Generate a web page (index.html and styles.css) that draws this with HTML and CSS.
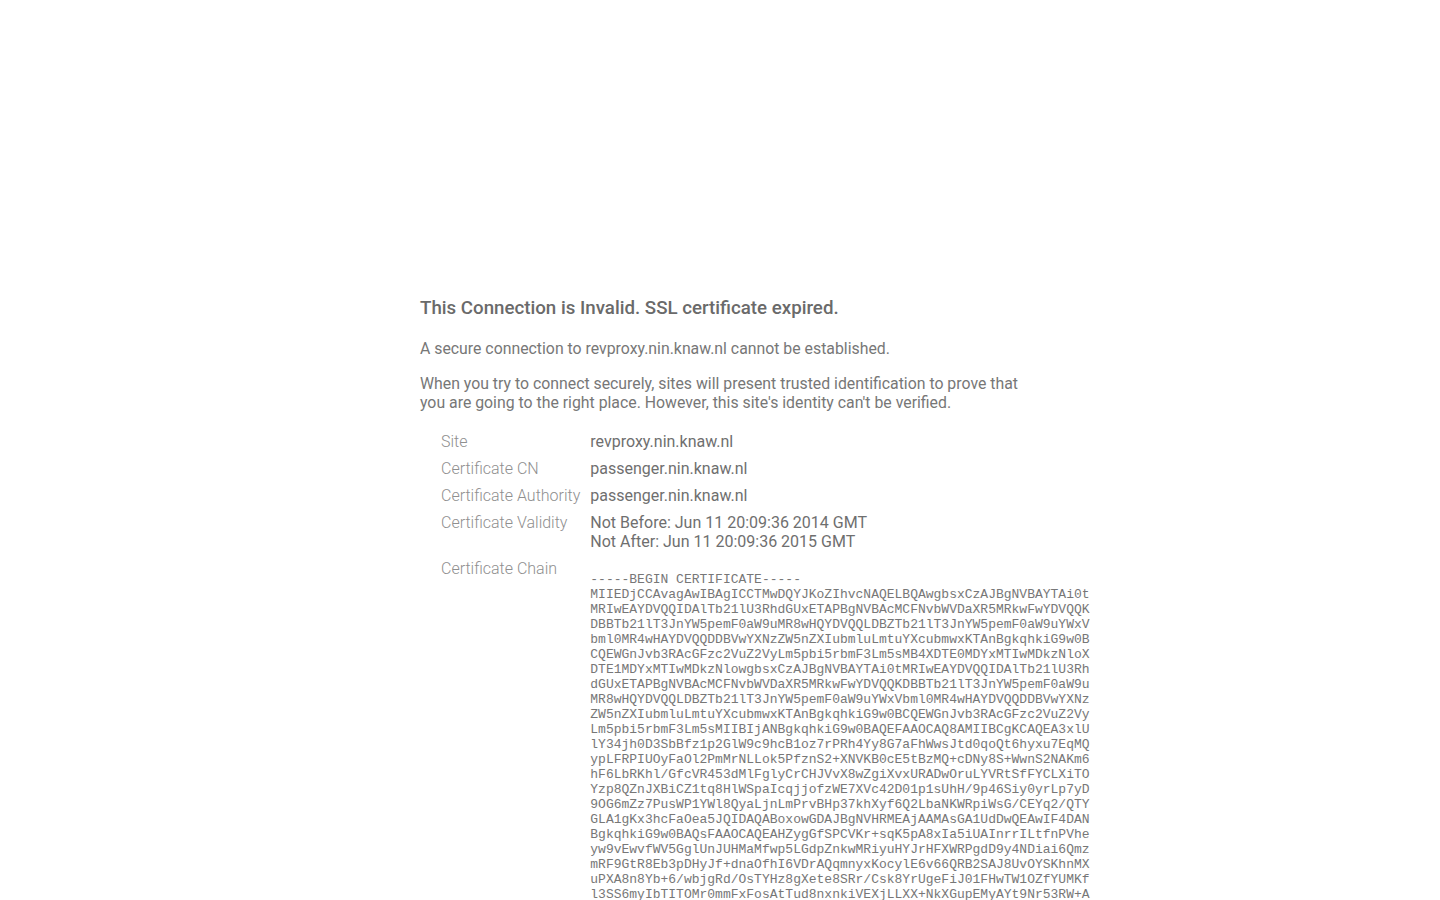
FILE: index.html
```html
<!DOCTYPE html>
<html lang="en">
<head>
<meta charset="utf-8">
<title>Invalid SSL certificate</title>
<link rel="stylesheet" href="styles.css">
</head>
<body>
<div class="page">
  <h1 class="title">This Connection is Invalid. SSL certificate expired.</h1>
  <p class="text">A secure connection to revproxy.nin.knaw.nl cannot be established.</p>
  <p class="text">When you try to connect securely, sites will present trusted identification to prove that you are going to the right place. However, this site's identity can't be verified.</p>
  <table class="details">
    <tr><td class="label">Site</td><td class="value">revproxy.nin.knaw.nl</td></tr>
    <tr><td class="label">Certificate CN</td><td class="value">passenger.nin.knaw.nl</td></tr>
    <tr><td class="label">Certificate Authority</td><td class="value">passenger.nin.knaw.nl</td></tr>
    <tr><td class="label">Certificate Validity</td><td class="value">Not Before: Jun 11 20:09:36 2014 GMT<br>Not After: Jun 11 20:09:36 2015 GMT</td></tr>
    <tr><td class="label">Certificate Chain</td><td class="value"><pre class="chain">-----BEGIN CERTIFICATE-----
MIIEDjCCAvagAwIBAgICCTMwDQYJKoZIhvcNAQELBQAwgbsxCzAJBgNVBAYTAi0t
MRIwEAYDVQQIDAlTb21lU3RhdGUxETAPBgNVBAcMCFNvbWVDaXR5MRkwFwYDVQQK
DBBTb21lT3JnYW5pemF0aW9uMR8wHQYDVQQLDBZTb21lT3JnYW5pemF0aW9uYWxV
bml0MR4wHAYDVQQDDBVwYXNzZW5nZXIubmluLmtuYXcubmwxKTAnBgkqhkiG9w0B
CQEWGnJvb3RAcGFzc2VuZ2VyLm5pbi5rbmF3Lm5sMB4XDTE0MDYxMTIwMDkzNloX
DTE1MDYxMTIwMDkzNlowgbsxCzAJBgNVBAYTAi0tMRIwEAYDVQQIDAlTb21lU3Rh
dGUxETAPBgNVBAcMCFNvbWVDaXR5MRkwFwYDVQQKDBBTb21lT3JnYW5pemF0aW9u
MR8wHQYDVQQLDBZTb21lT3JnYW5pemF0aW9uYWxVbml0MR4wHAYDVQQDDBVwYXNz
ZW5nZXIubmluLmtuYXcubmwxKTAnBgkqhkiG9w0BCQEWGnJvb3RAcGFzc2VuZ2Vy
Lm5pbi5rbmF3Lm5sMIIBIjANBgkqhkiG9w0BAQEFAAOCAQ8AMIIBCgKCAQEA3xlU
lY34jh0D3SbBfz1p2GlW9c9hcB1oz7rPRh4Yy8G7aFhWwsJtd0qoQt6hyxu7EqMQ
ypLFRPIUOyFaOl2PmMrNLLok5PfznS2+XNVKB0cE5tBzMQ+cDNy8S+WwnS2NAKm6
hF6LbRKhl/GfcVR453dMlFglyCrCHJVvX8wZgiXvxURADwOruLYVRtSfFYCLXiTO
Yzp8QZnJXBiCZ1tq8HlWSpaIcqjjofzWE7XVc42D01p1sUhH/9p46Siy0yrLp7yD
9OG6mZz7PusWP1YWl8QyaLjnLmPrvBHp37khXyf6Q2LbaNKWRpiWsG/CEYq2/QTY
GLA1gKx3hcFaOea5JQIDAQABoxowGDAJBgNVHRMEAjAAMAsGA1UdDwQEAwIF4DAN
BgkqhkiG9w0BAQsFAAOCAQEAHZygGfSPCVKr+sqK5pA8xIa5iUAInrrILtfnPVhe
yw9vEwvfWV5GglUnJUHMaMfwp5LGdpZnkwMRiyuHYJrHFXWRPgdD9y4NDiai6Qmz
mRF9GtR8Eb3pDHyJf+dnaOfhI6VDrAQqmnyxKocylE6v66QRB2SAJ8UvOYSKhnMX
uPXA8n8Yb+6/wbjgRd/OsTYHz8gXete8SRr/Csk8YrUgeFiJ01FHwTW1OZfYUMKf
l3SS6myIbTITOMr0mmFxFosAtTud8nxnkiVEXjLLXX+NkXGupEMyAYt9Nr53RW+A</pre></td></tr>
  </table>
</div>
</body>
</html>
```
FILE: styles.css
```css
html, body {
  margin: 0;
  padding: 0;
  background: #ffffff;
}

body {
  font-family: Roboto, "Liberation Sans", Arial, sans-serif;
  color: #777777;
}

.page {
  width: 610px;
  margin: 0 auto 0 420px;
  padding-top: 297px;
}

.title {
  margin: 0 0 20px 0;
  font-size: 18.72px;
  line-height: 22px;
  font-weight: 500;
  color: #6a6a6a;
}

.text {
  margin: 0 0 16px 0;
  font-size: 15.84px;
  line-height: 19px;
  font-weight: 400;
  color: #777777;
}

.details {
  border-collapse: collapse;
  margin-left: 16px;
  font-size: 16px;
  line-height: 19px;
}

.details td {
  padding: 4px 5px;
  vertical-align: top;
}

.label {
  color: #8f8f8f;
  font-weight: 300;
  white-space: nowrap;
  padding-right: 4px;
}

.value {
  color: #6f6f6f;
}

.chain {
  margin: 13px 0;
  font-family: "Liberation Mono", "Courier New", monospace;
  font-size: 13px;
  line-height: 15px;
  color: #777777;
}
```
